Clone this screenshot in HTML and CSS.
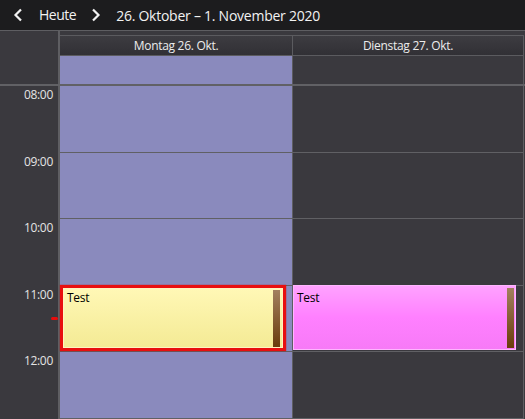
FILE: index.html
```html
<!DOCTYPE html>
<html lang="de">
<head>
<meta charset="utf-8">
<title>Kalender</title>
<link rel="stylesheet" href="styles.css">
</head>
<body>
<div class="toolbar">
  <button class="nav prev" aria-label="Zurück"><svg width="10" height="14" viewBox="0 0 10 14"><polyline points="8,1.5 2.5,7 8,12.5" fill="none" stroke="#f2f2f2" stroke-width="2.2"/></svg></button>
  <span class="today">Heute</span>
  <button class="nav next" aria-label="Weiter"><svg width="10" height="14" viewBox="0 0 10 14"><polyline points="2,1.5 7.5,7 2,12.5" fill="none" stroke="#f2f2f2" stroke-width="2.2"/></svg></button>
  <span class="range">26. Oktober – 1. November 2020</span>
</div>
<div class="head">
  <div class="corner"></div>
  <div class="day-heads">
    <div class="titles">
      <div class="title mon">Montag 26. Okt.</div>
      <div class="title tue">Dienstag 27. Okt.</div>
    </div>
    <div class="allday">
      <div class="ad mon work"></div>
      <div class="ad tue"></div>
    </div>
  </div>
</div>
<div class="body">
  <div class="times">
    <div class="hour h1">08:00</div>
    <div class="hour h2">09:00</div>
    <div class="hour h1">10:00</div>
    <div class="hour h2">11:00</div>
    <div class="hour h1">12:00</div>
    <div class="now"></div>
  </div>
  <div class="col mon work">
    <div class="slot h1"></div>
    <div class="slot h2"></div>
    <div class="slot h1"></div>
    <div class="slot h2"></div>
    <div class="slot h1"></div>
    <div class="event yellow selected"><span class="label">Test</span><span class="bar"></span></div>
  </div>
  <div class="col tue">
    <div class="slot h1"></div>
    <div class="slot h2"></div>
    <div class="slot h1"></div>
    <div class="slot h2"></div>
    <div class="slot h1"></div>
    <div class="event pink"><span class="label">Test</span><span class="bar"></span></div>
  </div>
</div>
</body>
</html>
```
FILE: styles.css
```css
* { box-sizing: border-box; }
html, body {
  margin: 0;
  height: 100%;
  overflow: hidden;
}
body {
  background: #3a393e;
  font-family: "Open Sans", "Noto Sans", sans-serif;
  font-size: 12px;
  letter-spacing: -0.3px;
  color: #e6e6e6;
}
.toolbar {
  height: 31px;
  background: #1c1c1e;
  border-bottom: 1px solid #5e5e62;
  display: flex;
  align-items: center;
  padding-left: 13px;
  color: #f2f2f2;
  font-size: 14px;
}
.nav {
  background: none;
  border: 0;
  padding: 0;
  width: 10px;
  height: 14px;
  display: flex;
}
.today { margin-left: 16px; margin-right: 15px; position: relative; top: -1px; letter-spacing: -0.5px; }
.range { margin-left: 15px; font-size: 14px; letter-spacing: -0.25px; }

.head {
  display: flex;
  border-bottom: 2px solid #616165;
}
.corner {
  width: 60px;
  border-right: 2px solid #5e5e62;
}
.day-heads {
  padding-top: 4px;
  display: flex;
  flex-direction: column;
}
.titles, .allday { display: flex; }
.titles {
  border-top: 1px solid #5b5b5f;
  border-bottom: 1px solid #5b5b5f;
}
.title {
  height: 19px;
  line-height: 19px;
  text-align: center;
  background: linear-gradient(#3d3c41, #313035);
  color: #ececec;
  border-right: 1px solid #5b5b5f;
}
.mon { width: 233px; }
.tue { width: 231px; }
.ad {
  height: 28px;
  border-right: 1px solid #5b5b5f;
}
.work { background: #8a8abd; }

.body { display: flex; }
.times {
  width: 60px;
  border-right: 2px solid #5e5e62;
  position: relative;
}
.hour {
  text-align: right;
  padding-right: 5px;
  padding-top: 1px;
  line-height: 16px;
  color: #e4e4e4;
}
.h1 { height: 67px; }
.h2 { height: 66px; }
.now {
  position: absolute;
  left: 51px;
  top: 231px;
  width: 7px;
  height: 3px;
  border-radius: 2px;
  background: #e80c0c;
}
.col {
  position: relative;
  border-right: 1px solid #5e5e62;
}
.slot { border-bottom: 1px solid #606064; }

.event {
  position: absolute;
  top: 199px;
  left: 0;
  color: #000;
  line-height: 16px;
}
.event .bar {
  position: absolute;
  width: 7px;
  background: linear-gradient(#a2805f, #6a3c0b);
}
.yellow {
  width: 226px;
  height: 66px;
  border: 3px solid #e80f0f;
  background: linear-gradient(#fff8b6, #f4ea94);
  box-shadow: inset 0 0 0 1px #fff3c0, 0 0 1px #c00;
  padding: 2px 0 0 4px;
}
.yellow .bar { top: 2px; bottom: 1px; right: 3px; }
.pink {
  width: 223px;
  height: 65px;
  border: 1px solid #ffb6ff;
  background: linear-gradient(#ffa2ff, #ff80ff 50%, #f77af7);
  padding: 4px 0 0 3px;
}
.pink .bar { top: 2px; bottom: 1px; right: 1px; }
```
